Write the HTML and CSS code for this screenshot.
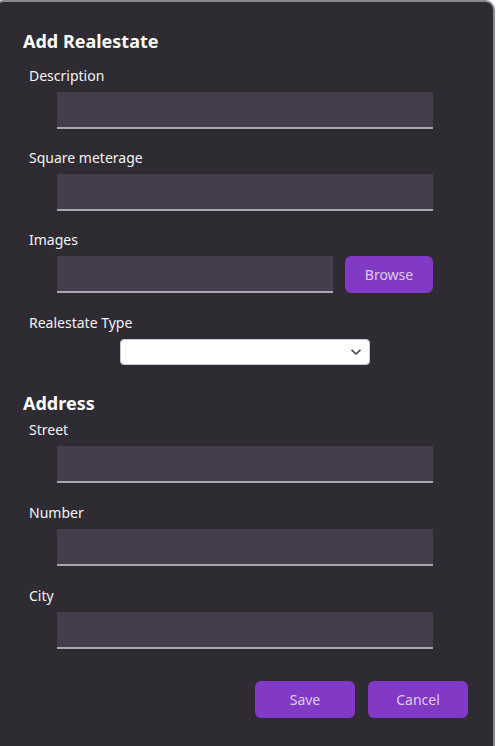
FILE: index.html
```html
<!DOCTYPE html>
<html>
<head>
<meta charset="utf-8">
<link rel="stylesheet" href="styles.css">
</head>
<body>
<div class="dialog">
  <h2 class="title">Add Realestate</h2>
  <div class="field">
    <label class="label">Description</label>
    <div class="input"></div>
  </div>
  <div class="field">
    <label class="label">Square meterage</label>
    <div class="input"></div>
  </div>
  <div class="field">
    <label class="label">Images</label>
    <div class="row">
      <div class="input input-short"></div>
      <button class="btn btn-browse">Browse</button>
    </div>
  </div>
  <div class="field field-type">
    <label class="label">Realestate Type</label>
    <div class="select">
      <svg class="chev" width="12" height="8" viewBox="0 0 12 8"><path d="M1.5 1.8 L6 6 L10.5 1.8" fill="none" stroke="#444" stroke-width="1.6"/></svg>
    </div>
  </div>
  <h2 class="title title-address">Address</h2>
  <div class="field field-tight">
    <label class="label">Street</label>
    <div class="input"></div>
  </div>
  <div class="field field-tight">
    <label class="label">Number</label>
    <div class="input"></div>
  </div>
  <div class="field field-tight">
    <label class="label">City</label>
    <div class="input"></div>
  </div>
  <div class="actions">
    <button class="btn btn-action">Save</button>
    <button class="btn btn-action">Cancel</button>
  </div>
</div>
</body>
</html>
```
FILE: styles.css
```css
html, body {
  margin: 0;
  padding: 0;
  background: #ffffff;
  overflow: hidden;
}
body {
  font-family: "Noto Sans", "Open Sans", sans-serif;
  color: #f2f2f2;
}
.dialog {
  margin-left: -6px;
  width: 501px;
  height: 760px;
  box-sizing: border-box;
  background: #2f2b33;
  border: 2px solid #8a8a8a;
  border-radius: 10px;
  padding: 27px 0 0 0;
  display: flex;
  flex-direction: column;
}
.title {
  margin: 0 0 0 27px;
  font-size: 18px;
  line-height: 24px;
  font-weight: 700;
  color: #ffffff;
}
.field {
  display: flex;
  flex-direction: column;
  margin-top: 13px;
}
.field + .field {
  margin-top: 19px;
}
.label {
  margin-left: 33px;
  font-size: 14px;
  line-height: 20px;
  color: #f4f4f4;
}
.input {
  margin: 6px 0 0 61px;
  width: 376px;
  height: 35px;
  background: #433d4c;
  border-bottom: 2px solid #aba7b0;
}
.row {
  display: flex;
  align-items: flex-start;
  gap: 12px;
  margin-left: 61px;
}
.row .input {
  margin-left: 0;
}
.input-short {
  width: 276px;
}
.btn {
  font-family: "Noto Sans", "Open Sans", sans-serif;
  font-size: 14px;
  color: #dccdee;
  background: #8139c6;
  border: none;
  border-radius: 6px;
  padding: 0;
  cursor: pointer;
}
.btn-browse {
  margin-top: 6px;
  width: 88px;
  height: 37px;
}
.field.field-type {
  margin-top: 20px;
}
.select {
  position: relative;
  margin: 6px 0 0 124px;
  width: 250px;
  height: 26px;
  box-sizing: border-box;
  background: #ffffff;
  border: 1px solid #c9c9cf;
  border-radius: 4px;
}
.chev {
  position: absolute;
  right: 7px;
  top: 8px;
}
.title-address {
  margin-top: 26px;
}
.field.field-tight {
  margin-top: 5px;
}
.field.field-tight + .field.field-tight {
  margin-top: 20px;
}
.field-tight .input {
  margin-top: 6px;
}
.actions {
  display: flex;
  justify-content: flex-end;
  gap: 13px;
  margin: 32px 25px 0 0;
}
.btn-action {
  width: 100px;
  height: 37px;
}
```
